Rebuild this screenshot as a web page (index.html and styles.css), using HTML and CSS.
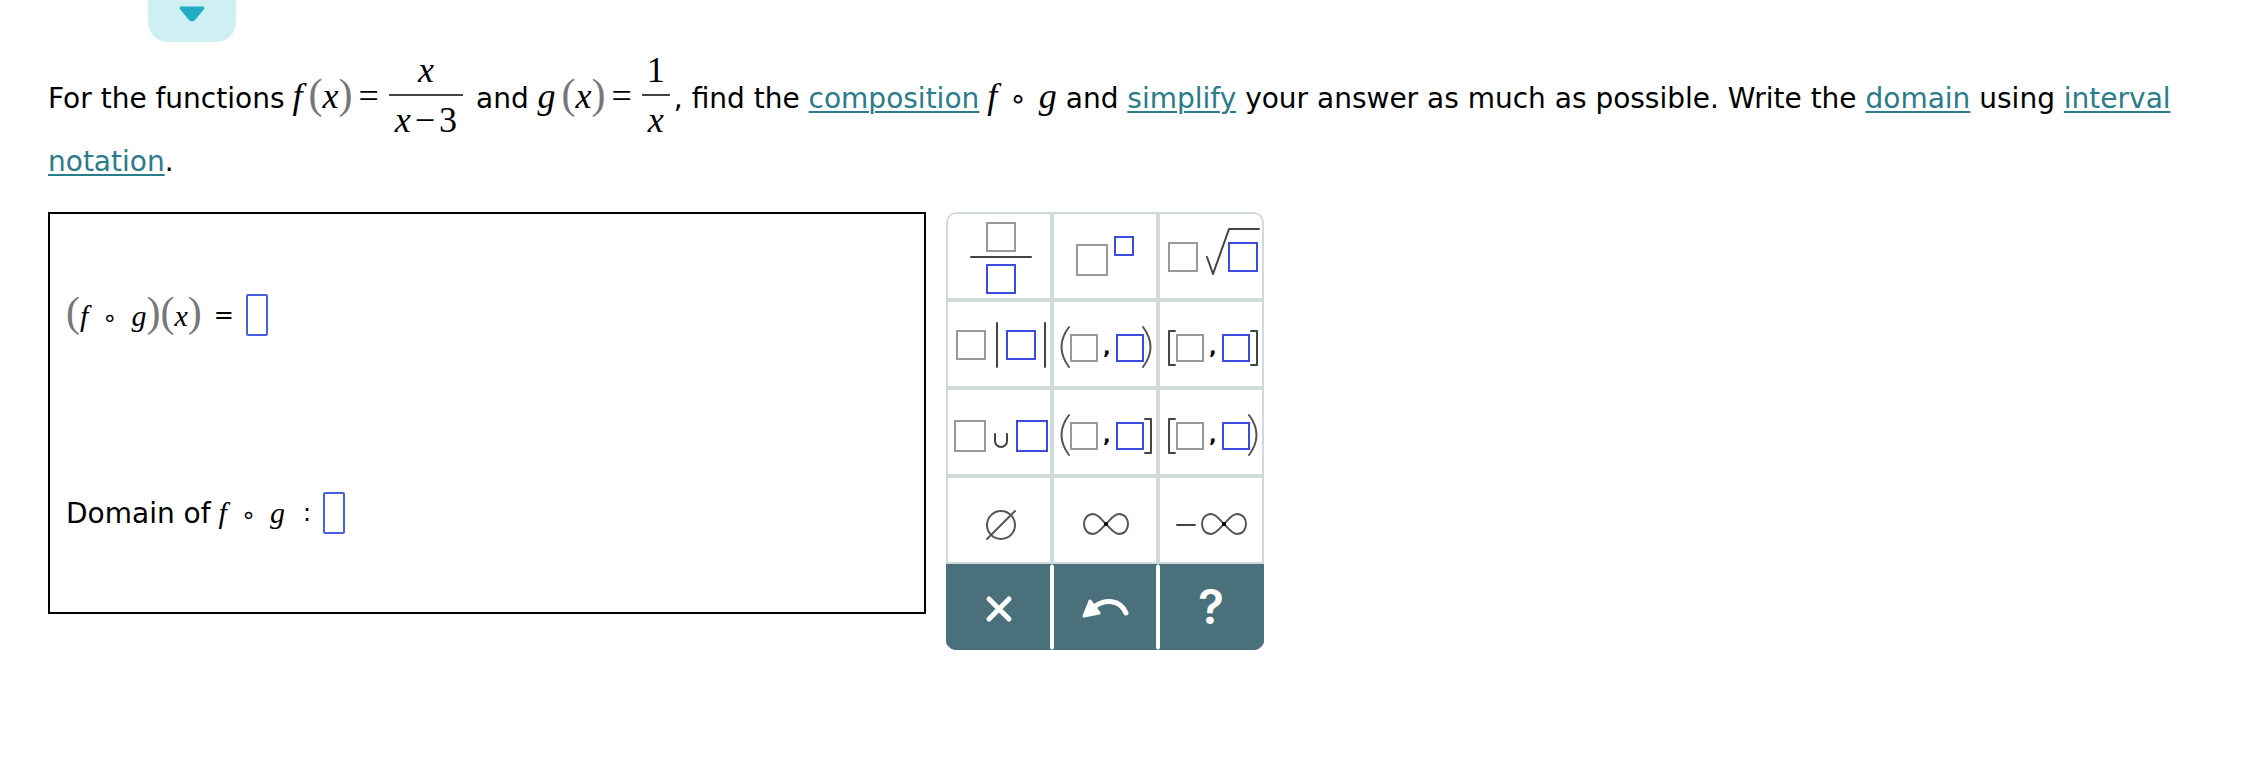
FILE: index.html
```
<!DOCTYPE html>
<html lang="en">
<head>
    <meta charset="UTF-8">
    <meta name="viewport" content="width=device-width, initial-scale=1.0">
    <title>Composition of functions</title>
    <link rel="stylesheet" href="styles.css">
</head>
<body>
    <button class="tab" type="button" aria-label="Expand">
        <svg width="28" height="16" viewBox="0 0 28 16">
            <path d="M3 2H25L16 13Q14 15 12 13Z" fill="#22adc5" stroke="#22adc5" stroke-width="3" stroke-linejoin="round"/>
        </svg>
    </button>
    <main>
        <p class="question">
            For the functions<span class="math"><i class="fn">f</i><b class="gap">(</b><i>x</i><b>)</b><span class="eq">=</span><span class="frac"><span class="num"><i>x</i></span><span class="den"><i>x</i><span class="minus">−</span>3</span></span></span>
            and <span class="math"><i>g</i><b class="gap">(</b><i>x</i><b>)</b><span class="eq">=</span><span class="frac"><span class="num">1</span><span class="den"><i>x</i></span></span></span>, find the <a href="#">composition</a><span class="math"><i class="fn">f</i><span class="ring">∘</span><i>g</i></span>
            and <a href="#">simplify</a> your answer as much as possible. Write the <a href="#">domain</a> using <a href="#">interval notation</a>.
        </p>
        <div class="work">
            <form class="answer">
                <div class="row">
                    <label class="math" for="comp"><b>(</b><i>f</i><span class="ring">∘</span><i>g</i><b>)</b><b>(</b><i>x</i><b>)</b></label>
                    <span class="sign">=</span>
                    <input type="text" id="comp">
                </div>
                <div class="row">
                    <label for="dom">Domain of<span class="math"><i class="fn">f</i><span class="ring">∘</span><i>g</i></span></label>
                    <span class="sign colon">:</span>
                    <input type="text" id="dom">
                </div>
            </form>
            <div class="keypad">
                <button type="button" aria-label="Fraction">
                    <svg viewBox="2 2 102 84">
                        <rect class="box" x="41" y="11" width="28" height="28"/>
                        <path class="ink" d="M25 45H85"/>
                        <rect class="box blue" x="41" y="53" width="28" height="28"/>
                    </svg>
                </button>
                <button type="button" aria-label="Exponent">
                    <svg viewBox="2 2 102 84">
                        <rect class="box" x="25" y="33" width="30" height="30"/>
                        <rect class="box blue" x="63" y="25" width="18" height="18"/>
                    </svg>
                </button>
                <button type="button" aria-label="Square root">
                    <svg viewBox="2 2 102 84">
                        <rect class="box" x="11" y="31" width="28" height="28"/>
                        <path class="ink" d="M49 45L55 62L71 17H101"/>
                        <rect class="box blue" x="71" y="31" width="28" height="28"/>
                    </svg>
                </button>
                <button type="button" aria-label="Absolute value">
                    <svg viewBox="2 2 102 84">
                        <rect class="box" x="11" y="31" width="28" height="28"/>
                        <path class="ink" d="M51 23V67M99 23V67"/>
                        <rect class="box blue" x="61" y="31" width="28" height="28"/>
                    </svg>
                </button>
                <button type="button" aria-label="Open interval">
                    <svg viewBox="2 2 102 84">
                        <path class="ink thin" d="M17 27Q2 47 17 67M91 27Q106 47 91 67"/>
                        <rect class="box" x="19" y="35" width="26" height="26"/>
                        <text x="51" y="54">,</text>
                        <rect class="box blue" x="65" y="35" width="26" height="26"/>
                    </svg>
                </button>
                <button type="button" aria-label="Closed interval">
                    <svg viewBox="2 2 102 84">
                        <path class="ink" d="M17 31H11V65H17M93 31H99V65H93"/>
                        <rect class="box" x="19" y="35" width="26" height="26"/>
                        <text x="51" y="54">,</text>
                        <rect class="box blue" x="65" y="35" width="26" height="26"/>
                    </svg>
                </button>
                <button type="button" aria-label="Union">
                    <svg viewBox="2 2 102 84">
                        <rect class="box" x="9" y="33" width="30" height="30"/>
                        <path class="ink" d="M49 46V53A6 6 0 0 0 61 53V46"/>
                        <rect class="box blue" x="71" y="33" width="30" height="30"/>
                    </svg>
                </button>
                <button type="button" aria-label="Left-open interval">
                    <svg viewBox="2 2 102 84">
                        <path class="ink thin" d="M17 27Q2 47 17 67"/>
                        <path class="ink" d="M93 31H99V65H93"/>
                        <rect class="box" x="19" y="35" width="26" height="26"/>
                        <text x="51" y="54">,</text>
                        <rect class="box blue" x="65" y="35" width="26" height="26"/>
                    </svg>
                </button>
                <button type="button" aria-label="Right-open interval">
                    <svg viewBox="2 2 102 84">
                        <path class="ink" d="M17 31H11V65H17"/>
                        <path class="ink thin" d="M91 27Q106 47 91 67"/>
                        <rect class="box" x="19" y="35" width="26" height="26"/>
                        <text x="51" y="54">,</text>
                        <rect class="box blue" x="65" y="35" width="26" height="26"/>
                    </svg>
                </button>
                <button type="button" aria-label="Empty set">
                    <svg viewBox="2 2 102 84">
                        <circle class="ink thin" cx="55" cy="49" r="14"/>
                        <path class="ink thin" d="M41 63L69 35"/>
                    </svg>
                </button>
                <button type="button" aria-label="Infinity">
                    <svg viewBox="2 2 102 84">
                        <path class="ink thin" d="M54 48C49 43 46 38 41 38C35 38 32 43 32 48S35 58 41 58C46 58 49 53 54 48C59 43 62 38 67 38C73 38 76 43 76 48S73 58 67 58C62 58 59 53 54 48Z"/>
                        <circle cx="54" cy="48" r="2"/>
                    </svg>
                </button>
                <button type="button" aria-label="Negative infinity">
                    <svg viewBox="2 2 102 84">
                        <path class="ink" d="M19 49H37"/>
                        <path class="ink thin" d="M66 48C61 43 58 38 53 38C47 38 44 43 44 48S47 58 53 58C58 58 61 53 66 48C71 43 74 38 79 38C85 38 88 43 88 48S85 58 79 58C74 58 71 53 66 48Z"/>
                        <circle cx="66" cy="48" r="2"/>
                    </svg>
                </button>
                <button class="dark" type="button" aria-label="Clear">
                    <svg viewBox="2 2 102 82">
                        <path class="white" d="M43 35L63 55M63 35L43 55"/>
                    </svg>
                </button>
                <button class="dark" type="button" aria-label="Undo">
                    <svg viewBox="2 2 102 82">
                        <path class="white" d="M42 43C53 35 68 35 74 49"/>
                        <path class="head" d="M38 37L32 52L47 49Z"/>
                    </svg>
                </button>
                <button class="dark" type="button" aria-label="Help">?</button>
            </div>
        </div>
    </main>
</body>
</html>
```
FILE: styles.css
```
body {
    margin: 0;
    background-color: #fff;
    color: #000;
    font-family: "DejaVu Sans", Verdana, sans-serif;
    font-size: 28px;
}
main {
    padding: 0 48px;
}
.tab {
    display: flex;
    justify-content: center;
    width: 88px;
    height: 42px;
    margin: 0 0 14px 148px;
    padding: 6px 0 0;
    border: none;
    border-radius: 0 0 20px 20px;
    background-color: #cff0f3;
    cursor: pointer;
}
.question {
    margin: 0 0 22px;
    line-height: 56px;
}
a {
    color: #2a7b8b;
    text-decoration-thickness: 2px;
    text-underline-offset: 3px;
}

/* math notation */
.math {
    font-family: "Liberation Serif", "Times New Roman", serif;
    font-size: 36px;
    line-height: 28px;
    white-space: nowrap;
}
.math b {
    color: #777;
    font-size: 42px;
    font-weight: normal;
}
.math .fn {
    margin-left: 8px;
}
.math .gap {
    margin-left: 6px;
}
.eq {
    margin: 0 10px 0 6px;
}
.minus {
    margin: 0 4px;
}
.ring {
    margin: 0 12px;
    font-family: "DejaVu Sans", sans-serif;
    font-size: 28px;
}
.frac {
    display: inline-flex;
    flex-direction: column;
    margin-right: 4px;
    text-align: center;
    vertical-align: 26px;
}
.num {
    padding-bottom: 10px;
    border-bottom: 2px solid #444;
}
.den {
    padding: 10px 6px 0;
}

.work {
    display: flex;
    align-items: flex-start;
    gap: 20px;
}
.answer {
    box-sizing: border-box;
    display: flex;
    flex-direction: column;
    gap: 156px;
    flex: 0 1 878px;
    padding: 80px 16px 78px;
    border: 2px solid #000;
}
.row {
    display: flex;
    align-items: center;
    height: 42px;
}
.row .math {
    font-size: 30px;
}
.row .math b {
    font-size: 42px;
}
.row .ring {
    margin: 0 14px;
    font-size: 24px;
}
.sign {
    margin: 0 12px;
    font-size: 24px;
}
.colon {
    margin-left: 18px;
}
.row input {
    box-sizing: border-box;
    width: 22px;
    height: 42px;
    padding: 0;
    border: 2px solid #4a5fe0;
    border-radius: 2px;
    font-size: 28px;
}

.keypad {
    display: grid;
    grid-template-columns: repeat(3, 106px);
    grid-template-rows: repeat(4, 88px) 86px;
    overflow: hidden;
    border-radius: 10px;
}
.keypad button {
    padding: 0;
    border: 2px solid #d0dadb;
    background-color: #fff;
    cursor: pointer;
}
.keypad button:first-child {
    border-top-left-radius: 10px;
}
.keypad button:nth-child(3) {
    border-top-right-radius: 10px;
}
.keypad svg {
    display: block;
    width: 102px;
    height: 84px;
}
.keypad text {
    font-family: "DejaVu Sans", sans-serif;
    font-size: 20px;
    font-weight: bold;
}
.box {
    fill: none;
    stroke: #999;
    stroke-width: 2;
}
.blue {
    stroke: #3a4be0;
}
.ink {
    fill: none;
    stroke: #444;
    stroke-width: 2;
    stroke-linecap: round;
    stroke-linejoin: round;
}
.thin {
    stroke: #555;
}
.keypad .dark {
    border-color: #4a707c;
    background-color: #4a707c;
    color: #fff;
    font-family: Inter, sans-serif;
    font-size: 48px;
    font-weight: 600;
    line-height: 82px;
}
.keypad .dark svg {
    height: 82px;
}
.keypad .dark + .dark {
    border-left-color: #fff;
}
.keypad .dark:not(:last-child) {
    border-right-color: #fff;
}
.white {
    fill: none;
    stroke: #fff;
    stroke-width: 5;
    stroke-linecap: round;
}
.head {
    fill: #fff;
    stroke: #fff;
    stroke-width: 3;
    stroke-linejoin: round;
}
```
